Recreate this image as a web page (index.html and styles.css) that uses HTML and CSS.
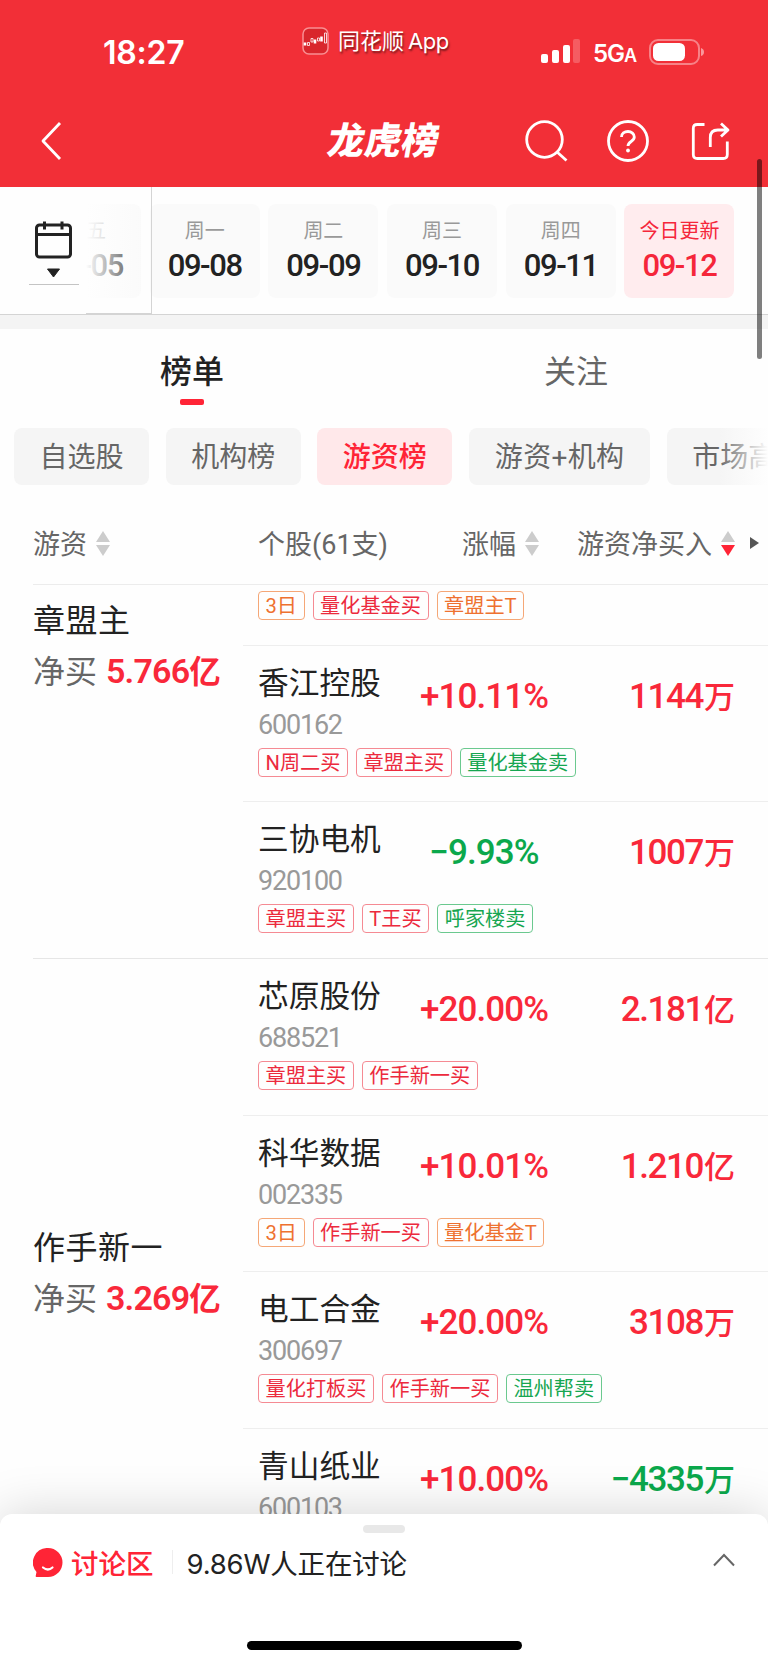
FILE: index.html
```html
<!DOCTYPE html>
<html lang="zh-CN">
  <head>
    <meta charset="utf-8">
    <title>龙虎榜</title>
    <link rel="stylesheet" href="styles.css">
  </head>
  <body>
    <div class="header">
      <div class="status">
        <div class="time">18:27</div>
        <div class="app">
          <svg class="app-icon" width="27" height="28" viewBox="0 0 27 28">
            <rect x="1" y="1" width="25" height="26" rx="6" fill="#d9262c" stroke="#f98f92" stroke-width="1.5"/>
            <path d="M3 15.500v3M13 12.500v4M19.500 9.500v5" stroke="#fff" stroke-width="2.600"/>
            <path d="M5.500 15.500h2v3h-2zM9 11.500h2v3.500H9zM15.500 11h2v3h-2zM22.500 6h2v10h-2z" fill="none" stroke="#fff" stroke-width=".8"/>
          </svg>
          <span>同花顺</span><span class="app-latin">App</span>
        </div>
        <div class="signal">
          <svg width="39" height="25" viewBox="0 0 39 25" fill="#fff">
            <rect x="0" y="15" width="7" height="9" rx="2"/>
            <rect x="11" y="11" width="7" height="13" rx="2"/>
            <rect x="22" y="6" width="7" height="18" rx="2"/>
            <rect x="32" y="0" width="7" height="24" rx="2" opacity=".22"/>
          </svg>
          <span class="net">5G<small>A</small></span>
          <svg width="56" height="27" viewBox="0 0 56 27">
            <rect x="1" y="1" width="49" height="24" rx="8" fill="none" stroke="#fff" stroke-width="2" opacity=".4"/>
            <rect x="4" y="4" width="32" height="18" rx="5.500" fill="#fff"/>
            <path d="M52 9q3 1 3 4t-3 4z" fill="#fff" opacity=".5"/>
          </svg>
        </div>
      </div>
      <div class="nav">
        <svg class="back" width="22" height="40" viewBox="0 0 22 40"><path d="M20 2L3 20l17 18" class="line"/></svg>
        <h1>龙虎榜</h1>
        <div class="nav-icons">
          <svg width="44" height="44" viewBox="0 0 44 44"><circle cx="20.500" cy="20.500" r="17.800" class="line"/><path d="M32.500 32.500l10 9" class="line"/></svg>
          <svg width="44" height="44" viewBox="0 0 44 44"><circle cx="22" cy="22" r="19.500" class="line"/><path d="M15.500 18c0-3.500 3-5.500 6.500-5.500s6.300 2.400 6.300 5.500c0 4.500-6.300 4.500-6.300 9" class="line"/><circle cx="22" cy="31.500" r="1.900" fill="#fff"/></svg>
          <svg width="44" height="44" viewBox="0 0 44 44"><path d="M16.500 5.500H9.300q-4 0-4 4v26q0 4 4 4h26q4 0 4-4V22.500" class="line"/><path d="M22.300 28V18.500q0-7.500 7.500-7.500h10M33 4.500l7 6.500-7 6.500" class="line"/></svg>
        </div>
      </div>
    </div>

    <div class="dates">
      <div class="date-list">
        <div class="date"><span>周五</span><b>09-05</b></div>
        <div class="date"><span>周一</span><b>09-08</b></div>
        <div class="date"><span>周二</span><b>09-09</b></div>
        <div class="date"><span>周三</span><b>09-10</b></div>
        <div class="date"><span>周四</span><b>09-11</b></div>
        <div class="date today"><span>今日更新</span><b>09-12</b></div>
      </div>
      <div class="calendar">
        <svg width="50" height="66" viewBox="0 0 50 66">
          <rect x="7.500" y="5" width="34" height="32" rx="3" fill="none" stroke="#222" stroke-width="3"/>
          <path d="M7 14.500h35M15.500 1.500v8M33 1.500v8" stroke="#222" stroke-width="3"/>
          <path d="M18.500 49h12l-6 8z" fill="#222" stroke="#222" stroke-linejoin="round"/>
          <path d="M0 64.500h50" stroke="#c4c4c4"/>
        </svg>
      </div>
      <div class="fade-left"></div>
    </div>

    <div class="tabs">
      <div class="tab active">榜单</div>
      <div class="tab">关注</div>
    </div>

    <div class="chips">
      <div class="chip">自选股</div>
      <div class="chip">机构榜</div>
      <div class="chip active">游资榜</div>
      <div class="chip wide">游资+机构</div>
      <div class="chip">市场高</div>
      <div class="fade-right"></div>
    </div>

    <div class="thead">
      <div class="th-name">游资 <svg class="sort" width="14" height="25" viewBox="0 0 14 25"><path d="M7 0l7 11H0z"/><path d="M0 14h14L7 25z"/></svg></div>
      <div class="th-stock">个股(61支)</div>
      <div class="th-rate">涨幅 <svg class="sort" width="14" height="25" viewBox="0 0 14 25"><path d="M7 0l7 11H0z"/><path d="M0 14h14L7 25z"/></svg></div>
      <div class="th-net">游资净买入 <svg class="sort" width="14" height="25" viewBox="0 0 14 25"><path d="M7 0l7 11H0z"/><path d="M0 14h14L7 25z" class="desc"/></svg>
        <svg class="more" width="9" height="12" viewBox="0 0 9 12"><path d="M0 0l9 6-9 6z" fill="#555"/></svg>
      </div>
    </div>

    <div class="list">
      <div class="group scrolled">
        <div class="trader">
          <div class="trader-name">章盟主</div>
          <div class="trader-net">净买 <b>5.766<i>亿</i></b></div>
        </div>
        <div class="stocks">
          <div class="stock">
            <div class="tags"><span class="tag orange">3日</span><span class="tag">量化基金买</span><span class="tag orange">章盟主T</span></div>
          </div>
          <div class="stock">
            <div class="name">香江控股</div><div class="code">600162</div>
            <div class="rate">+10.11%</div><div class="net-buy">1144<i>万</i></div>
            <div class="tags"><span class="tag">N周二买</span><span class="tag">章盟主买</span><span class="tag green">量化基金卖</span></div>
          </div>
          <div class="stock">
            <div class="name">三协电机</div><div class="code">920100</div>
            <div class="rate down">−9.93%</div><div class="net-buy">1007<i>万</i></div>
            <div class="tags"><span class="tag">章盟主买</span><span class="tag">T王买</span><span class="tag green">呼家楼卖</span></div>
          </div>
        </div>
      </div>
      <div class="group">
        <div class="trader">
          <div class="trader-name">作手新一</div>
          <div class="trader-net">净买 <b>3.269<i>亿</i></b></div>
        </div>
        <div class="stocks">
          <div class="stock">
            <div class="name">芯原股份</div><div class="code">688521</div>
            <div class="rate">+20.00%</div><div class="net-buy">2.181<i>亿</i></div>
            <div class="tags"><span class="tag">章盟主买</span><span class="tag">作手新一买</span></div>
          </div>
          <div class="stock">
            <div class="name">科华数据</div><div class="code">002335</div>
            <div class="rate">+10.01%</div><div class="net-buy">1.210<i>亿</i></div>
            <div class="tags"><span class="tag orange">3日</span><span class="tag">作手新一买</span><span class="tag orange">量化基金T</span></div>
          </div>
          <div class="stock">
            <div class="name">电工合金</div><div class="code">300697</div>
            <div class="rate">+20.00%</div><div class="net-buy">3108<i>万</i></div>
            <div class="tags"><span class="tag">量化打板买</span><span class="tag">作手新一买</span><span class="tag green">温州帮卖</span></div>
          </div>
          <div class="stock">
            <div class="name">青山纸业</div><div class="code">600103</div>
            <div class="rate">+10.00%</div><div class="net-buy down">−4335<i>万</i></div>
          </div>
        </div>
      </div>
    </div>

    <div class="sheet">
      <div class="handle"></div>
      <div class="discuss">
        <svg width="30" height="30" viewBox="0 0 30 30"><path d="M15 0a14.500 14.500 0 1 1 0 29H3.500q-1 0-.8-1l.8-4A14.500 14.500 0 0 1 15 0z" fill="#ff2436"/><path d="M10 19.500q5 4 9.500 0" fill="none" stroke="#fff" stroke-width="2.200" stroke-linecap="round"/></svg>
        <b>讨论区</b>
        <span class="discuss-text">9.86W人正在讨论</span>
        <svg class="up" width="22" height="14" viewBox="0 0 22 14"><path d="M1 12.500L11 2l10 10.500" fill="none" stroke="#666" stroke-width="2"/></svg>
      </div>
      <div class="home-bar"></div>
    </div>
    <div class="scrollbar"></div>
  </body>
</html>
```
FILE: styles.css
```css
* {
  box-sizing: border-box;
}
body {
  margin: 0;
  width: 768px;
  height: 1665px;
  position: relative;
  overflow: hidden;
  background: #fefefe;
  color: #222;
  font-family: Roboto, "Noto Sans CJK SC", sans-serif;
  white-space: nowrap;
}
svg {
  display: block;
  flex: none;
}
i {
  font-style: normal;
}
.line {
  fill: none;
  stroke: #fff;
  stroke-width: 2.800;
  stroke-linejoin: round;
}

/* header */
.header {
  height: 187px;
  background: #f22f37;
  color: #fff;
}
.status {
  height: 95px;
  display: flex;
  padding-left: 103px;
}
.time {
  width: 199px;
  padding-top: 33px;
  font: 600 32px/40px Inter, sans-serif;
  letter-spacing: -0.2px;
}
.app {
  width: 239px;
  display: flex;
  padding-top: 27px;
  font-size: 22px;
  line-height: 29px;
  text-shadow: 1px 2px 2px rgba(0, 0, 0, 0.5);
}
.app-icon {
  margin-right: 9px;
}
.app-latin {
  font-family: Inter, sans-serif;
  margin-left: 4px;
  letter-spacing: -0.4px;
}
.signal {
  display: flex;
  padding-top: 39px;
}
.net {
  width: 69px;
  flex: none;
  padding-left: 13px;
  font: 600 24px/30px Inter, sans-serif;
  letter-spacing: -1px;
}
.net small {
  font-size: 18px;
}
.nav {
  height: 92px;
  display: flex;
  align-items: center;
  padding: 0 36px 0 40px;
}
.back {
  margin-right: 266px;
}
h1 {
  width: 196px;
  margin: 0;
  padding-top: 1px;
  font-size: 37px;
  line-height: 40px;
  font-weight: 900;
  transform: skewX(-10deg);
}
.nav-icons {
  display: flex;
  gap: 38px;
}

/* dates */
.dates {
  height: 142px;
  position: relative;
  overflow: hidden;
  border-bottom: 14px solid #f4f4f4;
}
.dates::after {
  content: "";
  position: absolute;
  left: 0;
  right: 0;
  bottom: 0;
  height: 1px;
  background: #d4d4d4;
}
.date-list {
  display: flex;
  gap: 8.7px;
  padding: 16.500px 0 0 31px;
}
.date {
  width: 110px;
  height: 94px;
  flex: none;
  padding-top: 14px;
  border-radius: 8px;
  background: #fafafa;
  text-align: center;
}
.date span {
  display: block;
  font-size: 20px;
  line-height: 26px;
  color: #999;
}
.date b {
  display: block;
  font-size: 31px;
  line-height: 43px;
  font-weight: 500;
  letter-spacing: -1.4px;
}
.today {
  background: #ffecee;
}
.date.today span, .date.today b {
  color: #f5263a;
}
.calendar {
  position: absolute;
  left: 0;
  top: 0;
  width: 86px;
  height: 126px;
  padding: 33px 0 0 29px;
  background: #fefefe;
}
.fade-left {
  position: absolute;
  left: 86px;
  top: 0;
  width: 66px;
  height: 127px;
  border-right: 1px solid #d4d4d4;
  border-bottom: 1px solid #d4d4d4;
  background: linear-gradient(to right, #fefefe, rgba(254, 254, 254, 0));
}

/* tabs */
.tabs {
  height: 99px;
  display: flex;
}
.tab {
  flex: 1;
  padding-top: 20px;
  font-size: 32px;
  line-height: 46px;
  text-align: center;
  color: #666;
}
.tab.active {
  color: #222;
  font-weight: 500;
}
.tab.active::after {
  content: "";
  display: block;
  width: 24px;
  height: 6px;
  margin: 4px auto 0;
  border-radius: 2px;
  background: #ff2436;
}

/* chips */
.chips {
  height: 57px;
  position: relative;
  display: flex;
  gap: 16.700px;
  padding-left: 14px;
  overflow: hidden;
}
.chip {
  flex: none;
  width: 135px;
  padding-top: 2px;
  border-radius: 8px;
  background: #f5f5f5;
  color: #666;
  font-size: 28px;
  line-height: 56px;
  text-align: center;
}
.chip.wide {
  width: 181px;
  letter-spacing: 0.3px;
}
.chip.active {
  background: #ffe8ea;
  color: #ff2436;
  font-weight: 500;
}
.fade-right {
  position: absolute;
  right: 0;
  top: 0;
  width: 50px;
  height: 57px;
  background: linear-gradient(to right, rgba(254, 254, 254, 0), #fefefe);
}

/* table */
.thead {
  height: 100px;
  display: flex;
  margin-left: 33px;
  padding-top: 39px;
  border-bottom: 1px solid #ececec;
  font-size: 27px;
  line-height: 42px;
  color: #666;
}
.thead > div {
  display: flex;
}
.th-name {
  width: 225px;
}
.th-stock {
  width: 204px;
}
.th-rate {
  width: 115px;
}
.sort {
  margin: 7px 0 0 9px;
  fill: #ccc;
}
.desc {
  fill: #ff2436;
}
.more {
  margin: 13px 0 0 15px;
}
.list {
  height: 930px;
  overflow: hidden;
}
.group {
  height: 626.400px;
  position: relative;
  display: flex;
}
.group::after {
  content: "";
  position: absolute;
  left: 33px;
  right: 0;
  bottom: 0;
  height: 1px;
  background: #e6e6e6;
}
.scrolled {
  margin-top: -252.500px;
}
.trader {
  width: 243px;
  padding: 3px 0 0 33px;
  display: flex;
  flex-direction: column;
  justify-content: center;
}
.trader-name {
  font-size: 32px;
  line-height: 50px;
  letter-spacing: 0.5px;
}
.trader-net {
  font-size: 32px;
  line-height: 50px;
  color: #666;
}
.trader-net b {
  margin-left: 1px;
  font-size: 34px;
  font-weight: 600;
  letter-spacing: -0.8px;
  color: #f9283a;
}
.trader-net i {
  font-size: 31.500px;
}
.stocks {
  flex: 1;
  display: flex;
  flex-direction: column;
  justify-content: flex-end;
}
.stock {
  height: 156.600px;
  flex: none;
  display: grid;
  grid-template-columns: 140px 172px 165px;
  grid-template-rows: 55px 47px 54px;
  padding-left: 15px;
  border-bottom: 1px solid #eee;
}
.name {
  grid-area: 1 / 1;
  font-size: 30.700px;
  line-height: 40px;
  padding-top: 18px;
}
.code {
  grid-area: 2 / 1;
  font-size: 27px;
  line-height: 40px;
  padding-top: 4px;
  letter-spacing: -1.2px;
  color: #999;
}
.rate, .net-buy {
  grid-row: 1 / 3;
  padding-top: 26px;
  font-size: 35px;
  line-height: 50px;
  font-weight: 500;
  letter-spacing: -0.9px;
  color: #f9283a;
}
.rate {
  grid-column: 2;
  text-align: center;
}
.net-buy {
  grid-column: 3;
  text-align: right;
  letter-spacing: -1.4px;
}
.net-buy i {
  margin-left: 1px;
  font-size: 31px;
  letter-spacing: 0;
}
.rate.down, .net-buy.down {
  color: #0ba84c;
}
.tags {
  grid-area: 3 / 1 / 4 / 4;
  display: flex;
  gap: 8px;
}
.tag {
  height: 29px;
  padding: 0 6.500px;
  border: 1px solid #f58a93;
  border-radius: 4px;
  color: #ec2a3d;
  font-size: 20.200px;
  line-height: 28px;
}
.tag.orange {
  border-color: #f5a777;
  color: #ee7130;
}
.tag.green {
  border-color: #6bc98f;
  color: #16a651;
}

/* bottom sheet */
.sheet {
  position: absolute;
  left: 0;
  bottom: 0;
  width: 768px;
  height: 151px;
  padding-top: 11px;
  border-radius: 12px 12px 0 0;
  background: #fff;
  box-shadow: 0 0 50px rgba(0, 0, 0, 0.17);
}
.handle {
  width: 42px;
  height: 8px;
  margin: 0 auto;
  border-radius: 4px;
  background: #e8e8e8;
}
.discuss {
  height: 60px;
  display: flex;
  align-items: center;
  padding: 0 33px;
  font-size: 27.500px;
}
.discuss b {
  margin: -3px 18px 0 8px;
  font-weight: 500;
  color: #ff2436;
}
.discuss-text {
  margin-top: -3px;
  padding-left: 15px;
  font-family: Inter, "Noto Sans CJK SC", sans-serif;
  letter-spacing: -0.2px;
  background: linear-gradient(#eee, #eee) left / 1px 24px no-repeat;
}
.up {
  margin: -6px 0 0 auto;
}
.home-bar {
  width: 275px;
  height: 9px;
  margin: 48px auto 0;
  border-radius: 5px;
  background: #000;
}
.scrollbar {
  position: absolute;
  left: 757px;
  top: 159px;
  width: 5px;
  height: 200px;
  border-radius: 3px;
  background: rgba(0, 0, 0, 0.5);
}
```
